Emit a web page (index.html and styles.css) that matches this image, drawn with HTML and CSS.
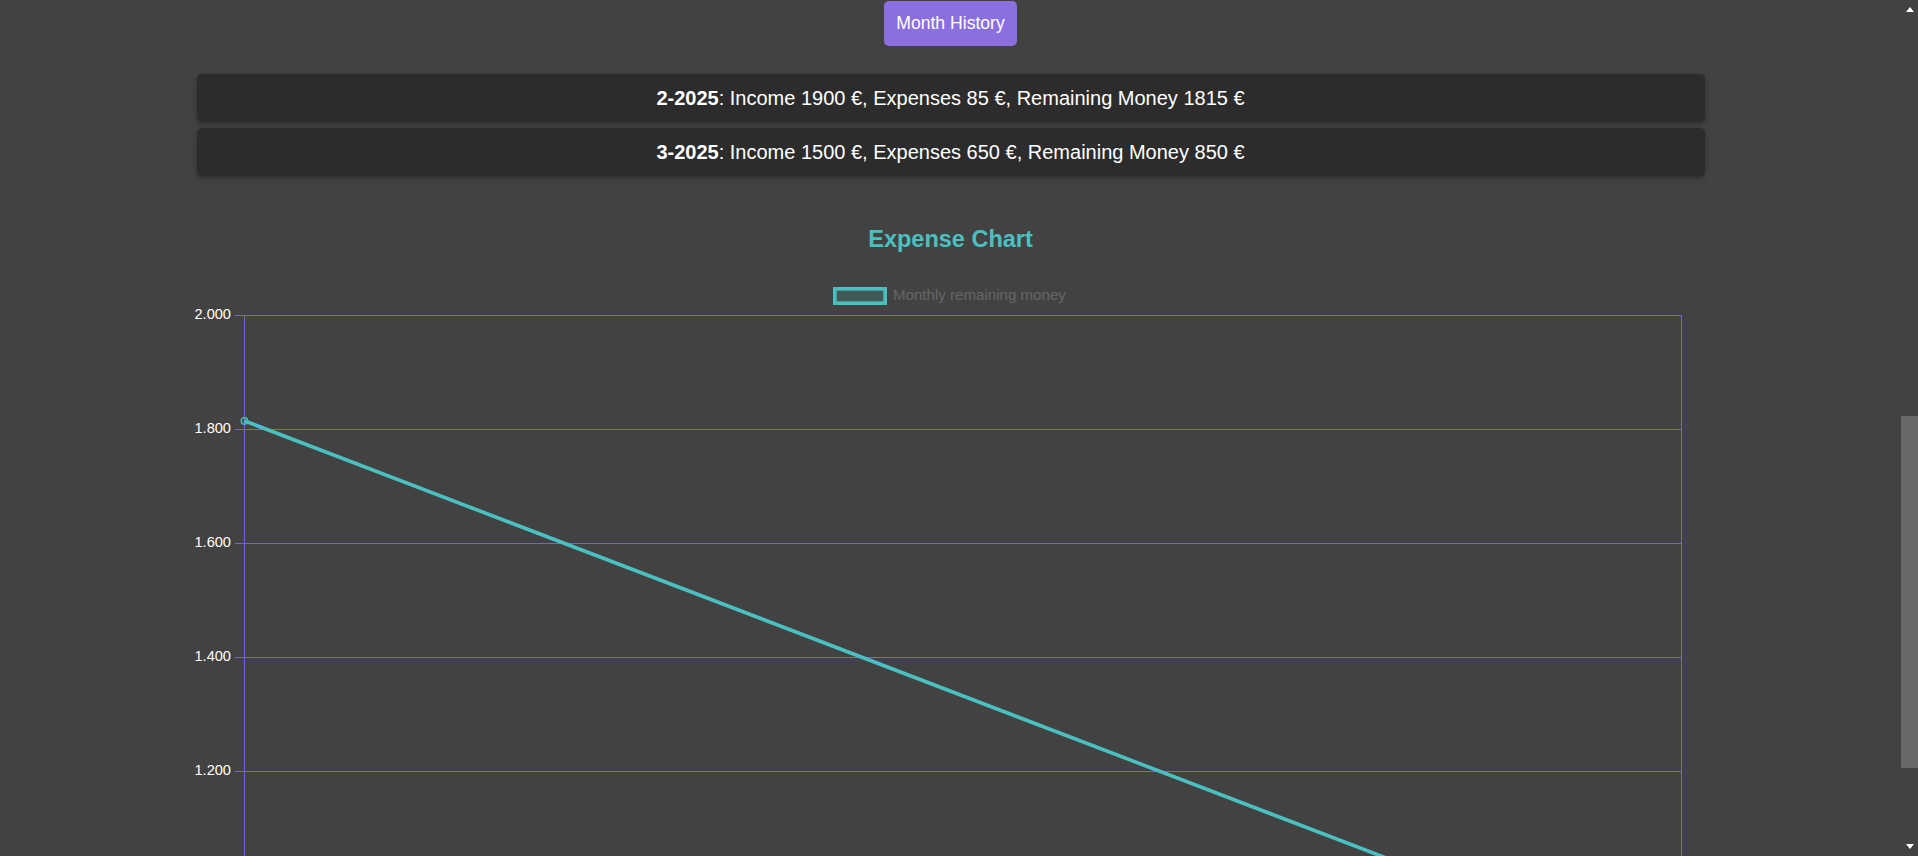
FILE: index.html
```html
<!DOCTYPE html>
<html lang="en">
<head>
<meta charset="utf-8">
<title>Month History</title>
<link rel="stylesheet" href="styles.css">
</head>
<body>
  <main class="page">
    <div class="toolbar">
      <button class="history-btn" type="button">Month History</button>
    </div>

    <div class="history-list">
      <div class="month-card"><span><strong>2-2025</strong>: Income 1900 €, Expenses 85 €, Remaining Money 1815 €</span></div>
      <div class="month-card"><span><strong>3-2025</strong>: Income 1500 €, Expenses 650 €, Remaining Money 850 €</span></div>
    </div>

    <h2 class="chart-title">Expense Chart</h2>

    <svg class="chart" width="1885" height="603" viewBox="0 0 1885 603" xmlns="http://www.w3.org/2000/svg">
      <!-- legend -->
      <rect x="826.8" y="35.8" width="50.4" height="14.4" fill="rgba(75,192,192,0.2)" stroke="#4bc0c0" stroke-width="3.6"/>
      <text class="legend-label" x="885" y="43">Monthly remaining money</text>

      <!-- grid -->
      <g stroke="#7b61d9" stroke-width="1">
        <line x1="227" y1="62.5" x2="1674" y2="62.5"/>
        <line x1="227" y1="176.5" x2="1674" y2="176.5"/>
        <line x1="227" y1="290.5" x2="1674" y2="290.5"/>
        <line x1="227" y1="404.5" x2="1674" y2="404.5"/>
        <line x1="227" y1="518.5" x2="1674" y2="518.5"/>
        <line x1="236.5" y1="62" x2="236.5" y2="603"/>
        <line x1="1673.5" y1="62" x2="1673.5" y2="603"/>
      </g>

      <!-- y ticks -->
      <g class="tick-label" text-anchor="end">
        <text x="223" y="62.5">2.000</text>
        <text x="223" y="176.5">1.800</text>
        <text x="223" y="290.5">1.600</text>
        <text x="223" y="404.5">1.400</text>
        <text x="223" y="518.5">1.200</text>
      </g>

      <!-- data -->
      <polyline points="236.5,167.9 1673.5,718" fill="none" stroke="#4bc0c0" stroke-width="3.6" stroke-linejoin="round"/>
      <circle cx="236.5" cy="167.9" r="3.3" fill="rgba(75,192,192,0.2)" stroke="#4bc0c0" stroke-width="1.3"/>
    </svg>
  </main>

  <div class="scrollbar" aria-hidden="true">
    <div class="sb-btn"><span class="sb-arrow-up"></span></div>
    <div class="sb-track"><div class="sb-thumb"></div></div>
    <div class="sb-btn sb-btn-down"><span class="sb-arrow-down"></span></div>
  </div>
</body>
</html>
```

FILE: styles.css
```css
html {
  background: #424242;
}

body {
  margin: 0;
  background: #424242;
  color: #ffffff;
  font-family: "Liberation Sans", Arial, sans-serif;
  display: flex;
  align-items: flex-start;
  height: 856px;
  overflow: hidden;
}

.page {
  flex: 1;
  min-width: 0;
  padding: 1px 8px 0;
}

.toolbar {
  display: flex;
  justify-content: center;
}

.history-btn {
  height: 45px;
  padding: 0 12px;
  border: none;
  border-radius: 5px;
  background: #8b6fe0;
  color: #ffffff;
  font-family: "Liberation Sans", Arial, sans-serif;
  font-size: 17.6px;
  cursor: pointer;
}

.history-list {
  width: 80%;
  margin: 28px auto 0;
  display: flex;
  flex-direction: column;
  gap: 6px;
}

.month-card {
  height: 48px;
  display: flex;
  align-items: center;
  justify-content: center;
  background: #2c2c2c;
  border-radius: 5px;
  box-shadow: 0 2px 5px rgba(0, 0, 0, 0.3);
  font-size: 20px;
}

.month-card strong {
  font-weight: bold;
}

.chart-title {
  margin: 49px 0 0;
  font-size: 23.5px;
  line-height: 28px;
  font-weight: bold;
  color: #4bc0c0;
  text-align: center;
}

.chart {
  display: block;
}

.legend-label {
  font-family: "Liberation Sans", Arial, sans-serif;
  font-size: 15.1px;
  fill: #666666;
  dominant-baseline: middle;
}

.tick-label {
  font-family: "Liberation Sans", Arial, sans-serif;
  font-size: 14.6px;
  fill: #ffffff;
  dominant-baseline: middle;
}

/* decorative dark scrollbar */
.scrollbar {
  flex: none;
  width: 17px;
  height: 856px;
  display: flex;
  flex-direction: column;
  background: #424242;
}

.sb-btn {
  height: 17px;
  flex: none;
  display: flex;
  justify-content: center;
  padding-top: 7px;
  box-sizing: border-box;
}

.sb-btn-down {
  padding-top: 0;
  padding-bottom: 7px;
  align-items: flex-end;
}

.sb-arrow-up {
  width: 0;
  height: 0;
  border-left: 4.5px solid transparent;
  border-right: 4.5px solid transparent;
  border-bottom: 5px solid #ffffff;
}

.sb-arrow-down {
  width: 0;
  height: 0;
  border-left: 4.5px solid transparent;
  border-right: 4.5px solid transparent;
  border-top: 5px solid #ffffff;
}

.sb-track {
  flex: 1;
  padding-top: 399px;
}

.sb-thumb {
  height: 352px;
  background: #696969;
}
```
